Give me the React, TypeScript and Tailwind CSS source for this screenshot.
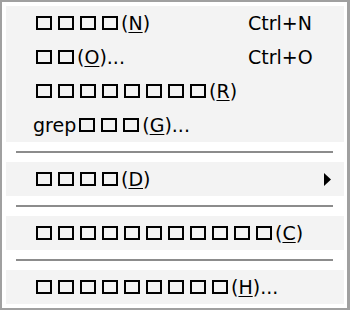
import React from "react";

type Item =
  | { kind: "item"; tofu: number; pre?: string; key: string; tail?: string; shortcut?: string; sub?: boolean }
  | { kind: "sep" };

const items: Item[] = [
  { kind: "item", tofu: 4, key: "N", shortcut: "Ctrl+N" },
  { kind: "item", tofu: 2, key: "O", tail: "...", shortcut: "Ctrl+O" },
  { kind: "item", tofu: 8, key: "R" },
  { kind: "item", tofu: 3, pre: "grep", key: "G", tail: "..." },
  { kind: "sep" },
  { kind: "item", tofu: 4, key: "D", sub: true },
  { kind: "sep" },
  { kind: "item", tofu: 11, key: "C" },
  { kind: "sep" },
  { kind: "item", tofu: 9, key: "H", tail: "..." },
];

// missing-glyph boxes, as the original font drew them
function Tofu({ n }: { n: number }) {
  return (
    <>
      {Array.from({ length: n }).map((_, i) => (
        <span
          key={i}
          className="inline-block shrink-0 w-[16px] h-[14px] mx-[3px] border-2 border-black text-transparent text-[8px] leading-none overflow-hidden"
        >
          □
        </span>
      ))}
    </>
  );
}

export default function App() {
  return (
    <div className="w-[350px] h-[310px] border-t-2 border-l-2 border-b-2 border-r-[3px] border-[#a0a0a0] bg-white pt-[4px] pb-[4px] pl-[4px] pr-[3px] font-['DejaVu_Sans',sans-serif] text-[19px] text-black">
      <div className="flex flex-col">
        {items.map((it, i) =>
          it.kind === "sep" ? (
            <div key={i} className="h-[20px] flex items-center pl-[10px] pr-[11px]">
              <div className="h-[2px] w-full bg-[#8c8c8c]" />
            </div>
          ) : (
            <div key={i} className="h-[34px] flex items-center bg-[#f3f3f3] pl-[27px] leading-none">
              <div className="w-[215px] shrink-0 whitespace-nowrap flex items-center">
                {it.pre && <span className="shrink-0">{it.pre}</span>}
                <Tofu n={it.tofu} />
                <span className="shrink-0">
                  (<u className="underline-offset-2">{it.key}</u>){it.tail}
                </span>
              </div>
              {it.shortcut && <span className="whitespace-nowrap">{it.shortcut}</span>}
              {it.sub && (
                <svg width="7" height="13" viewBox="0 0 7 13" className="ml-auto mr-[13px]">
                  <path d="M0 0 L7 6.5 L0 13 Z" fill="black" />
                </svg>
              )}
            </div>
          )
        )}
      </div>
    </div>
  );
}
